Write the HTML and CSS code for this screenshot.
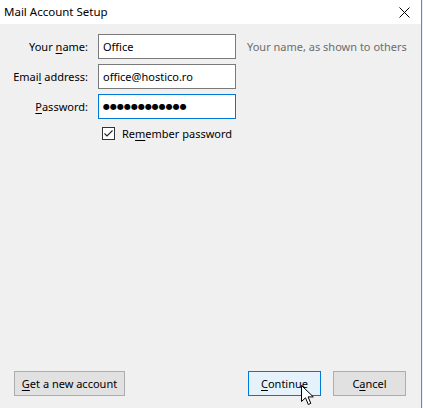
FILE: index.html
```html
<!DOCTYPE html>
<html>
<head>
<meta charset="utf-8">
<link rel="stylesheet" href="styles.css">
</head>
<body>
<div class="screen">
  <div class="window">
    <div class="titlebar">
      <span class="title">Mail Account Setup</span>
      <svg class="close" width="11" height="11" viewBox="0 0 11 11"><path d="M0.5 0.5 L10.5 10.5 M10.5 0.5 L0.5 10.5" stroke="#000" stroke-width="1" fill="none"/></svg>
    </div>
    <div class="content">
      <div class="form">
        <label class="label">Your <u>n</u>ame:</label>
        <div class="input">Office</div>
        <div class="hint">Your name, as shown to others</div>

        <label class="label">Emai<u>l</u> address:</label>
        <div class="input">office@hostico.ro</div>
        <div class="hint"></div>

        <label class="label"><u>P</u>assword:</label>
        <div class="input focused"><span class="dots">●●●●●●●●●●●●</span></div>
        <div class="hint"></div>

        <div class="spacer"></div>
        <div class="check-row">
          <svg class="checkbox" width="13" height="13" viewBox="0 0 13 13"><rect x="0.5" y="0.5" width="12" height="12" fill="#fff" stroke="#333"/><path d="M2.5 6.5 L5 9 L10.5 3.5" stroke="#222" stroke-width="1.1" fill="none"/></svg>
          <span>Re<u>m</u>ember password</span>
        </div>
      </div>
      <div class="grow"></div>
      <div class="buttons">
        <button class="btn wide"><u>G</u>et a new account</button>
        <div class="grow"></div>
        <button class="btn primary"><u>C</u>ontinue</button>
        <button class="btn">C<u>a</u>ncel</button>
      </div>
      <svg class="cursor" width="14" height="22" viewBox="0 0 14 22"><path d="M0.5 0.5 L0.5 16.5 L4.5 12.8 L7.3 19.5 L9.8 18.4 L7.1 11.9 L12.3 11.9 Z" fill="#fff" stroke="#000" stroke-width="1" stroke-linejoin="miter"/></svg>
    </div>
  </div>
  <div class="edge"></div>
</div>
</body>
</html>
```
FILE: styles.css
```css
html, body {
  margin: 0;
  padding: 0;
}
body {
  width: 423px;
  height: 408px;
  overflow: hidden;
  font-family: "Segoe UI", "Noto Sans", sans-serif;
  font-size: 11px;
  color: #000;
  background: #dfe9f6;
}
.screen {
  display: flex;
  height: 408px;
}
.window {
  width: 421px;
  display: flex;
  flex-direction: column;
  border-right: 1px solid #5b8dc8;
}
.edge {
  width: 1px;
  background: #e8eff8;
}
.titlebar {
  height: 24px;
  background: #fff;
  display: flex;
  align-items: center;
  padding: 0 11px 0 4px;
}
.title {
  flex: 1;
  line-height: 24px;
  font-size: 11.5px;
}
.close {
  display: block;
  margin-top: 1px;
}
.content {
  flex: 1;
  background: #f0f0f0;
  display: flex;
  flex-direction: column;
  position: relative;
}
.form {
  margin-top: 10px;
  display: grid;
  grid-template-columns: 88px 138px auto;
  column-gap: 10px;
  row-gap: 5px;
  align-items: center;
}
.label {
  text-align: right;
}
.label u, .check-row u, .btn u {
  text-underline-offset: 2px;
}
.input {
  box-sizing: border-box;
  height: 25px;
  border: 1px solid #7a7a7a;
  background: #fff;
  padding: 0 4px;
  display: flex;
  align-items: center;
}
.input.focused {
  border-color: #0078d7;
}
.dots {
  font-family: "DejaVu Sans", sans-serif;
  font-size: 8px;
  letter-spacing: 0;
}
.hint {
  color: #6d6d6d;
  padding-left: 1px;
}
.check-row {
  grid-column: 2 / span 2;
  display: flex;
  align-items: center;
  gap: 7px;
  padding-left: 4px;
  margin-top: 2px;
}
.checkbox {
  display: block;
}
.grow {
  flex: 1;
}
.buttons {
  display: flex;
  align-items: center;
  gap: 12px;
  padding: 0 15px 12px 14px;
}
.btn {
  box-sizing: border-box;
  height: 25px;
  width: 73px;
  padding: 0;
  font: inherit;
  color: #000;
  background: #e1e1e1;
  border: 1px solid #adadad;
  border-radius: 0;
}
.btn.wide {
  width: 111px;
}
.btn.primary {
  background: #e5f1fb;
  border-color: #0078d7;
}
.cursor {
  position: absolute;
  left: 301px;
  top: 361px;
}
```
